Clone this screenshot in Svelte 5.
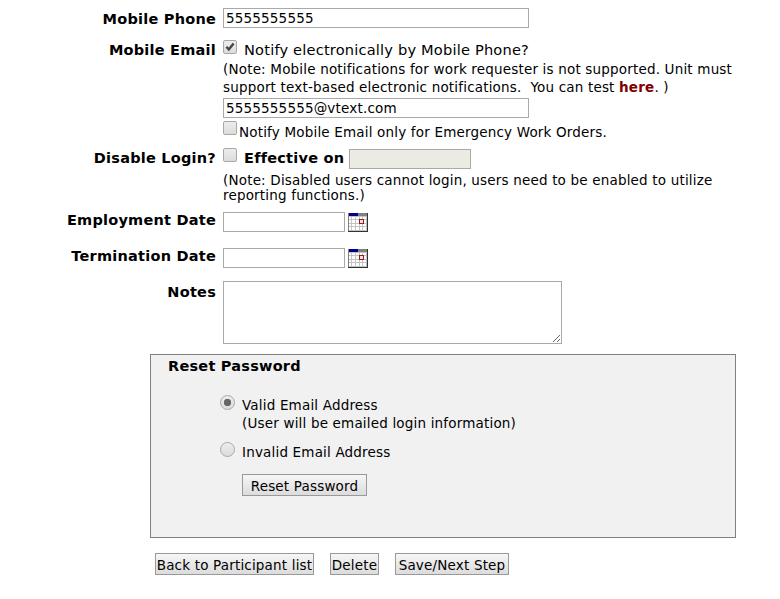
<script lang="ts">
  let phone = '5555555555';
  let email = '5555555555@vtext.com';
  let notify = true;
  let emergencyOnly = false;
  let disabled = false;
  let resetMode = 'valid';

  const dates = [{ label: 'Employment Date' }, { label: 'Termination Date' }];
</script>

<form class="page" onsubmit={(e) => e.preventDefault()}>
  <div class="row phone">
    <div class="label"><b>Mobile Phone</b></div>
    <div class="field"><input class="text wide" type="text" bind:value={phone} /></div>
  </div>

  <div class="row email">
    <div class="label"><b>Mobile Email</b></div>
    <div class="field">
      <label class="check-line notify">
        <input type="checkbox" bind:checked={notify} />
        <span class="big">Notify electronically by Mobile Phone?</span>
      </label>
      <p class="note">
        (Note: Mobile notifications for work requester is not supported. Unit must<br />
        support text-based electronic notifications.&nbsp; You can test <a href="#test">here</a>. )
      </p>
      <input class="text wide" type="text" bind:value={email} />
      <label class="check-line emergency">
        <input type="checkbox" bind:checked={emergencyOnly} />
        <span>Notify Mobile Email only for Emergency Work Orders.</span>
      </label>
    </div>
  </div>

  <div class="row disable">
    <div class="label"><b>Disable Login?</b></div>
    <div class="field">
      <div class="check-line effective">
        <input type="checkbox" bind:checked={disabled} />
        <b>Effective on</b>
        <input class="text date off" type="text" readonly />
      </div>
      <p class="note tight">
        (Note: Disabled users cannot login, users need to be enabled to utilize<br />
        reporting functions.)
      </p>
    </div>
  </div>

  {#each dates as d}
    <div class="row dates">
      <div class="label"><b>{d.label}</b></div>
      <div class="field date-field">
        <input class="text date" type="text" />
        <svg width="21" height="20" viewBox="0 0 21 20" shape-rendering="crispEdges">
          <path fill="#c4c4c4" d="M1 1h20v19h-20z" />
          <path
            fill="#fff"
            d="M2 5h2v2h-2zM5 5h3v2h-3zM9 5h3v2h-3zM13 5h2v2h-2zM16 5h3v2h-3zM2 8h2v3h-2zM5 8h3v3h-3zM9 8h3v3h-3zM16 8h3v3h-3zM2 12h2v2h-2zM5 12h3v2h-3zM9 12h3v2h-3zM13 12h2v2h-2zM16 12h3v2h-3zM2 15h2v3h-2zM5 15h3v3h-3zM9 15h3v3h-3zM13 15h2v3h-2zM16 15h3v3h-3z"
          />
          <path fill="#808080" d="M1 1h20v3h-20zM1 1h1v19h-1z" />
          <path fill="#00008b" d="M2 1h9v3h-9z" />
          <path fill="#333" d="M20 1h1v19h-1zM1 19h20v1h-20z" />
          <path fill="#a01818" d="M12 7h5v5h-5z" />
          <path fill="#f4e4e4" d="M13 8h3v3h-3z" />
        </svg>
      </div>
    </div>
  {/each}

  <div class="row notes">
    <div class="label"><b>Notes</b></div>
    <div class="field"><textarea></textarea></div>
  </div>

  <section class="panel">
    <h2>Reset Password</h2>
    <label class="radio valid">
      <input type="radio" value="valid" bind:group={resetMode} />
      <span>Valid Email Address<br />(User will be emailed login information)</span>
    </label>
    <label class="radio invalid">
      <input type="radio" value="invalid" bind:group={resetMode} />
      <span>Invalid Email Address</span>
    </label>
    <button class="reset" type="button">Reset Password</button>
  </section>

  <div class="actions">
    <button class="back" type="button">Back to Participant list</button>
    <button class="delete" type="button">Delete</button>
    <button class="save" type="button">Save/Next Step</button>
  </div>
</form>

<style>
  :global(body) {
    background: #fff;
  }
  .page {
    box-sizing: border-box;
    width: 780px;
    height: 599px;
    padding-top: 8px;
    overflow: hidden;
    color: #000;
    font: 13.5px/18px Verdana, 'DejaVu Sans', sans-serif;
    letter-spacing: 0.18px;
    white-space: nowrap;
  }
  .row {
    display: grid;
    grid-template-columns: 216px 1fr;
    column-gap: 7px;
  }
  .label {
    text-align: right;
    padding-top: 2px;
  }
  b,
  h2 {
    font-size: 14.5px;
    font-weight: bold;
    letter-spacing: 0.23px;
  }
  input,
  textarea,
  button {
    box-sizing: border-box;
    margin: 0;
    font: inherit;
    letter-spacing: inherit;
    color: inherit;
    border-radius: 0;
  }
  .text {
    display: block;
    height: 20px;
    padding: 1px 2px;
    border: 1px solid #a9a9a9;
    background: #fff;
  }
  .wide {
    width: 306px;
  }
  .date {
    width: 122px;
  }
  .off {
    background: #ebebe4;
  }
  .phone {
    height: 31px;
  }
  .email {
    height: 109px;
  }
  .check-line {
    display: flex;
    align-items: flex-start;
  }
  input[type='checkbox'] {
    appearance: none;
    flex: none;
    width: 14px;
    height: 14px;
    border: 1px solid #a8a8a8;
    border-radius: 2px;
    background: linear-gradient(#ededed, #dcdcdc);
  }
  input[type='checkbox']:checked {
    background: url("data:image/svg+xml,%3Csvg xmlns='http://www.w3.org/2000/svg' viewBox='0 0 12 12'%3E%3Cpath d='M2.4 5.8l2.4 2.7L9.6 2.4' fill='none' stroke='%23444' stroke-width='2.4'/%3E%3C/svg%3E"), linear-gradient(#ededed, #dcdcdc);
  }
  .notify {
    height: 21px;
    padding-top: 1px;
    gap: 7px;
  }
  .notify .big {
    padding-top: 1px;
    font-size: 14.6px;
    letter-spacing: 0.19px;
  }
  .note {
    margin: -1px 0 0;
    height: 38px;
  }
  .note a {
    color: #800000;
    font-weight: bold;
    text-decoration: none;
  }
  .emergency {
    padding-top: 3px;
    gap: 2px;
  }
  .emergency span {
    padding-top: 2px;
  }
  .disable {
    height: 64px;
  }
  .disable .label {
    padding-top: 1px;
  }
  .effective {
    height: 23px;
  }
  .effective b {
    padding: 1px 5px 0 7px;
  }
  .effective .text {
    margin-top: 1px;
  }
  .tight {
    margin-top: 2px;
    line-height: 15px;
  }
  .dates {
    height: 36px;
  }
  .dates .label {
    padding: 0;
    margin-top: -1px;
  }
  .date-field {
    display: flex;
    gap: 2px;
  }
  .notes {
    height: 73px;
    margin-top: -3px;
  }
  .notes .label {
    padding-top: 2px;
  }
  textarea {
    display: block;
    width: 339px;
    height: 63px;
    border: 1px solid #a9a9a9;
  }
  .panel {
    box-sizing: border-box;
    width: 586px;
    height: 184px;
    margin-left: 150px;
    padding: 2px 0 0 69px;
    border: 1px solid #808080;
    background: #f1f1f1;
  }
  h2 {
    margin: 0 0 20px -52px;
  }
  .radio {
    display: flex;
    gap: 7px;
  }
  .radio span {
    padding-top: 1px;
  }
  input[type='radio'] {
    appearance: none;
    width: 15px;
    height: 15px;
    border: 1px solid #a8a8a8;
    border-radius: 50%;
    background: linear-gradient(#ededed, #dcdcdc);
  }
  input[type='radio']:checked {
    background: radial-gradient(circle, #666 3.4px, transparent 4px), linear-gradient(#ededed, #dcdcdc);
  }
  .valid {
    height: 47px;
  }
  .invalid {
    height: 32px;
  }
  button {
    height: 22px;
    padding: 1px 0 0;
    border: 1px solid #999;
    background: linear-gradient(#f6f6f6, #dcdcdc);
  }
  .reset {
    display: block;
    width: 125px;
    margin-left: 22px;
  }
  .actions {
    display: flex;
    gap: 16px;
    padding: 15px 0 0 155px;
  }
  .back {
    width: 159px;
  }
  .delete {
    width: 49px;
  }
  .save {
    width: 114px;
  }
</style>
